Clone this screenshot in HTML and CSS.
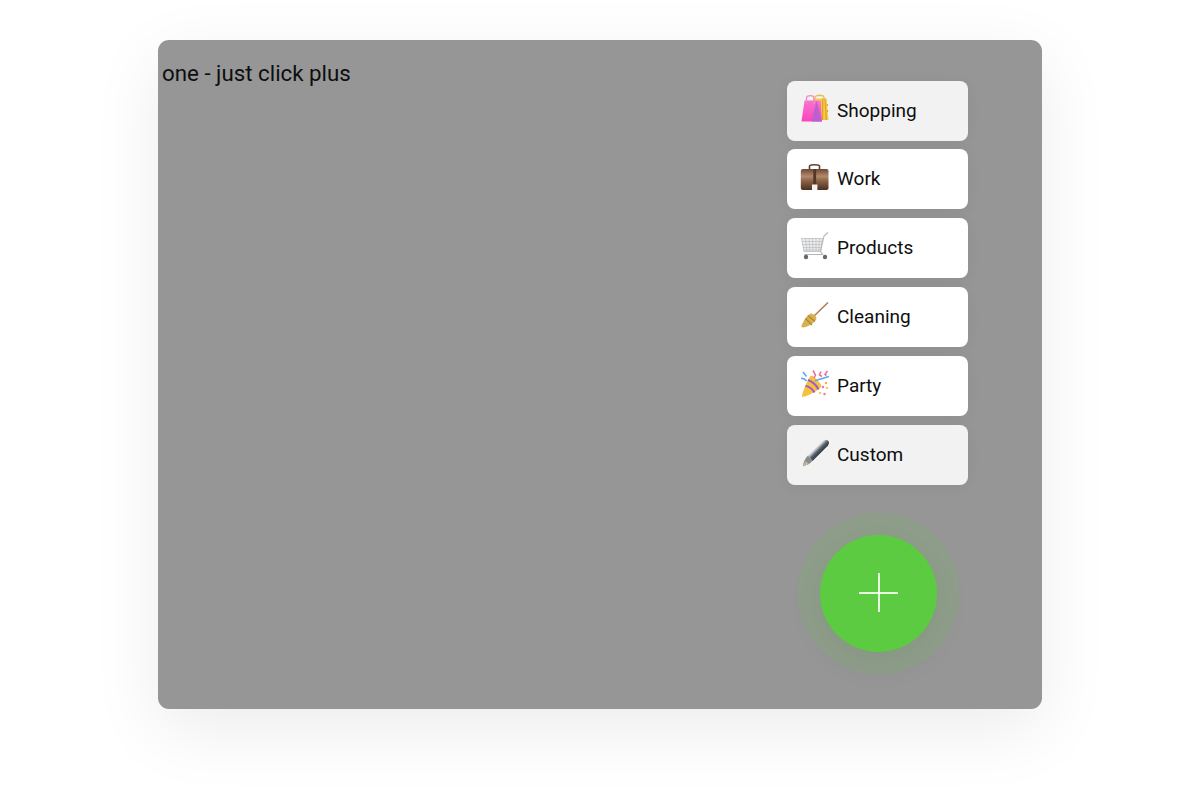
FILE: index.html
```html
<!DOCTYPE html>
<html lang="en">

<head>
  <meta charset="UTF-8">
  <meta name="viewport" content="width=device-width, initial-scale=1.0">
  <title>one - just click plus</title>
  <link rel="stylesheet" href="styles.css">
</head>

<body>
  <div id="card">
    <p id="title">one - just click plus</p>
    <div id="side">
      <ul id="menu">
        <li class="item-grey">
          <svg class="icon" viewBox="0 0 30 30">
            <defs>
              <linearGradient id="bagPink" x1="0" y1="0" x2="0" y2="1">
                <stop offset="0" stop-color="#f873cc" />
                <stop offset="1" stop-color="#f946bd" />
              </linearGradient>
            </defs>
            <path d="M15 7V3.500C15 0.500 24 0.500 24 3.500V9" fill="none" stroke="#e8bd55" stroke-width="1.300" />
            <path d="M13 4.500H26.500L28.500 26H13Z" fill="#f6cb45" />
            <path d="M22 4.500h1.300v21.500h-1.300zM24.500 4.500h1.200l1.300 21.500h-1.500zM27 10h1v2h-1zM27 16h1.200v2h-1.200z" fill="#dfa62f" />
            <path d="M4.500 6.500H20.500L22 27.500H1.500Z" fill="url(#bagPink)" />
            <path d="M6.500 10V3.800C6.500 0.800 14 0.800 14 3.800V10" fill="none" stroke="#f486d0" stroke-width="1.300" />
            <path d="M16.500 7L21.800 27.500H11.500Z" fill="#bb5fd2" />
          </svg>
          <span>Shopping</span>
        </li>
        <li>
          <svg class="icon" viewBox="0 0 30 30">
            <defs>
              <linearGradient id="caseBrown" x1="0" y1="0" x2="0" y2="1">
                <stop offset="0" stop-color="#6f4834" />
                <stop offset="0.350" stop-color="#b08a6e" />
                <stop offset="0.550" stop-color="#8e6548" />
                <stop offset="1" stop-color="#4a2f20" />
              </linearGradient>
            </defs>
            <path d="M9.500 7.500V4C9.500 2.800 11 2.700 14.500 2.700S19.500 2.800 19.500 4V7.500" fill="none" stroke="#5e3d2b" stroke-width="1.600" />
            <rect x="0.800" y="7" width="27.700" height="21" rx="2" fill="url(#caseBrown)" />
            <rect x="13.300" y="7" width="2.800" height="16" fill="#553626" />
            <rect x="12" y="22.500" width="5.400" height="5.500" fill="#f5f1ee" />
          </svg>
          <span>Work</span>
        </li>
        <li>
          <svg class="icon" viewBox="0 0 30 30">
            <path d="M1.500 7.500H22.500L20.500 20.500H4Z" fill="#eceded" />
            <path d="M2 10.500H22M2.500 13.500H21.500M3 16.500H21M3.500 19H20.800M5.500 7.500L7 20.500M9 7.500L10 20.500M12.500 7.500L13 20.500M16 7.500V20.500M19.500 7.500L18.500 20.500" fill="none" stroke="#b4b6b7" stroke-width="0.600" />
            <path d="M1.500 7.500H22.500L20.500 20.500H4Z" fill="none" stroke="#bcbebf" stroke-width="0.800" />
            <path d="M28 1.500L24 5L20.500 20.500L22.500 23.500H4.500" fill="none" stroke="#b4b6b8" stroke-width="1.100" />
            <circle cx="6" cy="26" r="2.200" fill="#66696b" />
            <circle cx="25" cy="26" r="2.200" fill="#66696b" />
          </svg>
          <span>Products</span>
        </li>
        <li>
          <svg class="icon" viewBox="0 0 30 30">
            <path d="M28 2.500L13 17" fill="none" stroke="#b07a52" stroke-width="1.500" />
            <path d="M10.500 13.500C13 13.500 16.500 16 16.500 18.500C15 23 8 27.500 2 27.500C1 27 1.500 25 3 22.500C4.500 19 7.500 15 10.500 13.500Z" fill="#d6b150" />
            <path d="M5.500 18.500L12 25M8 15.800L15 21.500" fill="none" stroke="#a98632" stroke-width="1.100" />
          </svg>
          <span>Cleaning</span>
        </li>
        <li>
          <svg class="icon" viewBox="0 0 30 30">
            <path d="M2 27.500C1.500 26 6 13 10.500 7C13 5.500 21 14 21.500 17.500C19 21 5 29 2 27.500Z" fill="#f5c23f" />
            <path d="M5.500 17C9.500 17.500 13 21 14.500 23.500M8 11C12 12.500 16.500 16.500 18.500 20.500" fill="none" stroke="#a35ac9" stroke-width="2.100" />
            <path d="M3 3L6.500 7.500M1 9.500C3.500 9 5 10 6.500 12M15 12C19 10 24 9 29 7.500" fill="none" stroke="#5ea9ef" stroke-width="1.600" />
            <path d="M13 1.500L15.500 6L14 9M21 2.500L19.500 6L22 7.500M27.500 2L25 5.500L26.500 6.500" fill="none" stroke="#f2709b" stroke-width="1.600" />
            <circle cx="26" cy="14" r="1.200" fill="#f2b53c" />
            <circle cx="23" cy="18" r="1.200" fill="#f2709b" />
            <circle cx="27" cy="19" r="1" fill="#f2b53c" />
            <circle cx="24.500" cy="25" r="1.200" fill="#f2709b" />
            <circle cx="20" cy="24" r="1" fill="#f2b53c" />
          </svg>
          <span>Party</span>
        </li>
        <li class="item-grey">
          <svg class="icon" viewBox="0 0 30 30">
            <defs>
              <linearGradient id="penBody" gradientUnits="userSpaceOnUse" x1="12" y1="9" x2="20" y2="17">
                <stop offset="0" stop-color="#6c737a" />
                <stop offset="0.330" stop-color="#d9dee2" />
                <stop offset="0.600" stop-color="#59626b" />
                <stop offset="1" stop-color="#1f262d" />
              </linearGradient>
            </defs>
            <path d="M8 17.500L23.500 2.500C25.500 1 29 2 29 5C28.800 6.500 27.500 8 26.500 9L12.500 23Z" fill="url(#penBody)" />
            <path d="M8 17.500L12.500 23L9 26L3 28.200C3 25 5 20.500 8 17.500Z" fill="#868b8c" />
            <path d="M3 28.200L5.500 23L9 26Z" fill="#cdb491" />
          </svg>
          <span>Custom</span>
        </li>
      </ul>
      <div id="plus"><i id="plus-h"></i><i id="plus-v"></i></div>
    </div>
  </div>
</body>

</html>
```

FILE: styles.css
```css
* {
  margin: 0;
  padding: 0;
  box-sizing: border-box;
}

body {
  height: 789px;
  padding-top: 40px;
  overflow: hidden;
  background-color: #fff;
  font-family: Roboto, "Liberation Sans", sans-serif;
  color: #0e0e0e;
}

li {
  list-style: none;
}

#card {
  display: flex;
  justify-content: space-between;
  width: 884px;
  height: 669px;
  margin: 0 auto;
  padding: 19px 74px 0 4px;
  background-color: #969696;
  border-radius: 11px;
  box-shadow: 0 20px 70px rgba(0, 0, 0, 0.08);
}

#title {
  font-size: 22.3px;
  line-height: 28px;
}

#side {
  display: flex;
  flex-direction: column;
  align-items: center;
  width: 181px;
  padding-top: 21.5px;
}

#menu {
  display: flex;
  flex-direction: column;
  gap: 8.9px;
  width: 100%;
}

#menu li {
  display: flex;
  align-items: center;
  gap: 7px;
  height: 60px;
  padding-left: 13px;
  background-color: #fff;
  border-radius: 8px;
  box-shadow: 0 2px 14px rgba(0, 0, 0, 0.05);
  font-size: 19px;
}

#menu li span {
  margin-bottom: 1px;
}

#menu .item-grey {
  background-color: #f2f2f2;
}

.icon {
  flex: none;
  width: 30px;
  height: 30px;
  margin-bottom: 4px;
}

#plus {
  position: relative;
  width: 117px;
  height: 117px;
  margin-top: 50px;
  margin-left: 2px;
  background-color: #5ccb41;
  border-radius: 50%;
  box-shadow: 0 0 0 22.5px rgba(92, 203, 65, 0.14), 0 10px 40px rgba(0, 0, 0, 0.06);
}

#plus-h,
#plus-v {
  position: absolute;
  background-color: rgba(255, 255, 255, 0.85);
}

#plus-h {
  left: 39px;
  top: 57px;
  width: 39px;
  height: 2px;
}

#plus-v {
  left: 58px;
  top: 38px;
  width: 2px;
  height: 39px;
}
```
